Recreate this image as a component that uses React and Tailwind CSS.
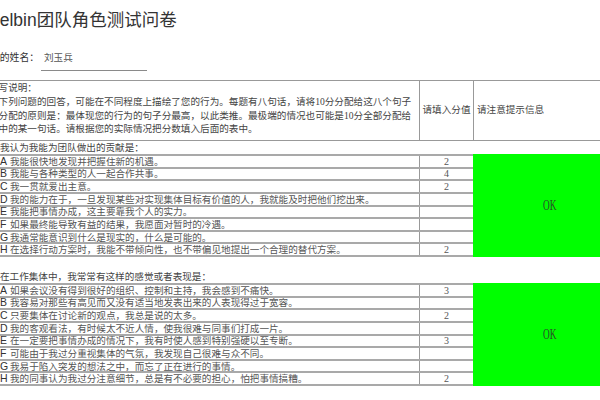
import React from 'react';

const serif = { fontFamily: '"Liberation Serif", "Noto Sans CJK SC", serif' };

const rowsA = [
  ['A', '我能很快地发现并把握住新的机遇。', '2'],
  ['B', '我能与各种类型的人一起合作共事。', '4'],
  ['C', '我一贯就爱出主意。', '2'],
  ['D', '我的能力在于，一旦发现某些对实现集体目标有价值的人，我就能及时把他们挖出来。', ''],
  ['E', '我能把事情办成，这主要靠我个人的实力。', ''],
  ['F', '如果最终能导致有益的结果，我愿面对暂时的冷遇。', ''],
  ['G', '我通常能意识到什么是现实的，什么是可能的。', ''],
  ['H', '在选择行动方案时，我能不带倾向性，也不带偏见地提出一个合理的替代方案。', '2'],
];

const rowsB = [
  ['A', '如果会议没有得到很好的组织、控制和主持，我会感到不痛快。', '3'],
  ['B', '我容易对那些有高见而又没有适当地发表出来的人表现得过于宽容。', ''],
  ['C', '只要集体在讨论新的观点，我总是说的太多。', '2'],
  ['D', '我的客观看法，有时候太不近人情，使我很难与同事们打成一片。', ''],
  ['E', '在一定要把事情办成的情况下，我有时使人感到特别强硬以至专断。', '3'],
  ['F', '可能由于我过分重视集体的气氛，我发现自己很难与众不同。', ''],
  ['G', '我易于陷入突发的想法之中，而忘了正在进行的事情。', ''],
  ['H', '我的同事认为我过分注意细节，总是有不必要的担心，怕把事情搞糟。', '2'],
];

const Section = ({ title, rows }) => (
  <>
    <div className="h-[13px] text-[9.6px] leading-[13px] text-[#444] whitespace-nowrap" style={serif}>
      {title}
    </div>
    <div className="flex">
      <div className="w-[473px] border-t-2 border-[#a9a9a9]">
        {rows.map(([k, text, v]) => (
          <div key={k} className="flex h-[12.625px] border-b-2 border-[#a9a9a9]">
            <div className="w-[419px] flex items-center overflow-hidden whitespace-nowrap">
              <span className="text-[10.5px] leading-[11px] text-[#333] w-[10px] shrink-0 font-['Liberation_Sans',sans-serif]">{k}</span>
              <span className="text-[9.6px] leading-[11px] text-[#555]" style={serif}>{text}</span>
            </div>
            <div className="w-[54px] border-l border-[#999] flex items-center justify-center text-[10px] leading-[11px] text-[#555]" style={serif}>
              {v}
            </div>
          </div>
        ))}
      </div>
      <div className="flex-1 bg-[#00ff00] flex items-center justify-center pl-[26px]">
        <span className="inline-block text-[15px] leading-none text-[#2a4a2a] scale-x-[0.62]" style={serif}>OK</span>
      </div>
    </div>
  </>
);

export default function App() {
  return (
    <div className="w-[600px] h-[400px] bg-white overflow-hidden">
      <div className="h-[42px] flex items-center whitespace-nowrap">
        <span className="-ml-[12px] text-[17.5px] leading-none text-[#333] font-['Liberation_Sans','Noto_Sans_CJK_SC',sans-serif]">
          Belbin团队角色测试问卷
        </span>
      </div>
      <div className="h-[38px] pt-[9px] flex items-start whitespace-nowrap">
        <span className="-ml-[10px] text-[9.8px] leading-[14px] text-[#333] font-['Liberation_Sans','Noto_Sans_CJK_SC',sans-serif]">
          您的姓名：
        </span>
        <span className="ml-[2px] w-[106px] pb-[5px] border-b border-[#8a8a8a] pl-[3px] text-[9.6px] leading-[14px] text-[#555]" style={serif}>
          刘玉兵
        </span>
      </div>
      <div className="h-[61px] border-y border-[#999] grid grid-cols-[419px_54px_1fr] text-[9.6px] text-[#444]" style={serif}>
        <div className="overflow-hidden whitespace-nowrap leading-[13.8px]">
          <div className="-ml-[11px]">填写说明：</div>
          <div className="-ml-[11px]">对下列问题的回答，可能在不同程度上描绘了您的行为。每题有八句话，请将10分分配给这八个句子</div>
          <div className="-ml-[11px]">，分配的原则是：最体现您的行为的句子分最高，以此类推。最极端的情况也可能是10分全部分配给</div>
          <div className="-ml-[11px]">其中的某一句话。请根据您的实际情况把分数填入后面的表中。</div>
        </div>
        <div className="border-l border-[#999] flex items-center justify-center whitespace-nowrap">请填入分值</div>
        <div className="border-l border-[#999] flex items-center pl-[3px] whitespace-nowrap">请注意提示信息</div>
      </div>
      <Section title="我认为我能为团队做出的贡献是：" rows={rowsA} />
      <div className="h-[13px]" />
      <Section title="在工作集体中，我常常有这样的感觉或者表现是：" rows={rowsB} />
    </div>
  );
}
